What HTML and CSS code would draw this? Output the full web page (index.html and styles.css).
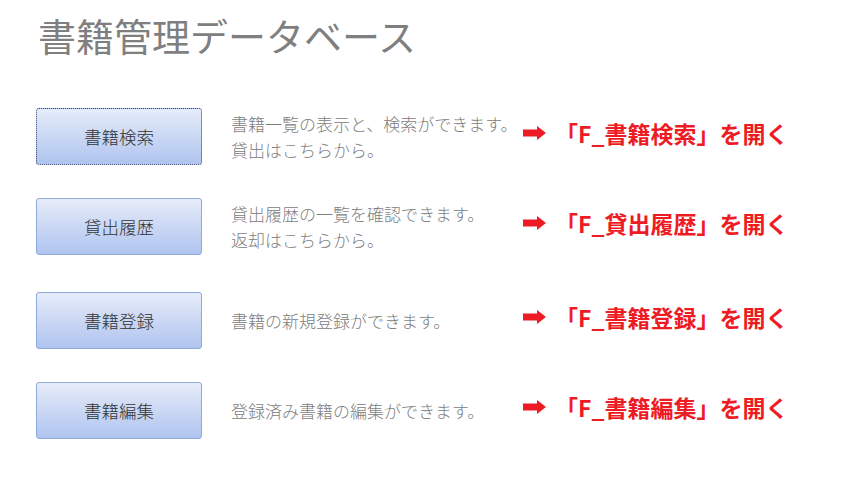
FILE: index.html
```html
<!DOCTYPE html>
<html lang="ja">
  <head>
    <meta charset="UTF-8" />
    <meta name="viewport" content="width=device-width, initial-scale=1.0" />
    <title>書籍管理データベース</title>
    <link rel="stylesheet" href="styles.css">
  </head>
  <body>
    <h1 class="title">書籍管理データベース</h1>
    <div class="menu">
      <div class="row">
        <div class="btn focus">書籍検索</div>
        <div class="desc">書籍一覧の表示と、検索ができます。<br>貸出はこちらから。</div>
        <svg class="arrow" width="23" height="14" viewBox="0 0 23 14"><rect x="0" y="3.5" width="15" height="7" fill="#ed1c24"/><polygon points="14,0 23,7 14,14" fill="#ed1c24"/></svg>
        <div class="note">「F_書籍検索」を開く</div>
      </div>
      <div class="row">
        <div class="btn">貸出履歴</div>
        <div class="desc">貸出履歴の一覧を確認できます。<br>返却はこちらから。</div>
        <svg class="arrow" width="23" height="14" viewBox="0 0 23 14"><rect x="0" y="3.5" width="15" height="7" fill="#ed1c24"/><polygon points="14,0 23,7 14,14" fill="#ed1c24"/></svg>
        <div class="note">「F_貸出履歴」を開く</div>
      </div>
      <div class="row wide">
        <div class="btn">書籍登録</div>
        <div class="desc">書籍の新規登録ができます。</div>
        <svg class="arrow" width="23" height="14" viewBox="0 0 23 14"><rect x="0" y="3.5" width="15" height="7" fill="#ed1c24"/><polygon points="14,0 23,7 14,14" fill="#ed1c24"/></svg>
        <div class="note">「F_書籍登録」を開く</div>
      </div>
      <div class="row">
        <div class="btn">書籍編集</div>
        <div class="desc">登録済み書籍の編集ができます。</div>
        <svg class="arrow" width="23" height="14" viewBox="0 0 23 14"><rect x="0" y="3.5" width="15" height="7" fill="#ed1c24"/><polygon points="14,0 23,7 14,14" fill="#ed1c24"/></svg>
        <div class="note">「F_書籍編集」を開く</div>
      </div>
    </div>
  </body>
</html>
```

FILE: styles.css
```css
body {
  margin: 0;
  background: #fff;
  font-family: "Noto Sans CJK JP", "Noto Sans", sans-serif;
}
.title {
  margin: 0;
  padding: 15px 0 0 38px;
  height: 108px;
  box-sizing: border-box;
  font-size: 38px;
  line-height: 40px;
  font-weight: normal;
  color: #7f7f7f;
}
.menu {
  display: flex;
  flex-direction: column;
  gap: 33px;
  padding-left: 36px;
}
.row {
  display: flex;
  align-items: center;
  height: 57px;
}
.wide {
  margin-top: 4px;
}
.btn {
  flex: none;
  width: 166px;
  height: 57px;
  box-sizing: border-box;
  border: 1px solid #8eaadb;
  border-radius: 3px;
  background: linear-gradient(#e6ecf9, #afc4ef);
  display: flex;
  align-items: center;
  justify-content: center;
  font-size: 17.5px;
  font-weight: 300;
  color: #333;
}
.focus {
  border: 1px dotted #34406a;
}
.desc {
  flex: none;
  margin-left: 29px;
  width: 292px;
  font-size: 17px;
  font-weight: 300;
  line-height: 26px;
  color: #808080;
}
.arrow {
  flex: none;
  margin-bottom: 8px;
}
.note {
  margin-left: 9px;
  margin-bottom: 8px;
  font-size: 23px;
  font-weight: bold;
  color: #ed1c24;
}
```
